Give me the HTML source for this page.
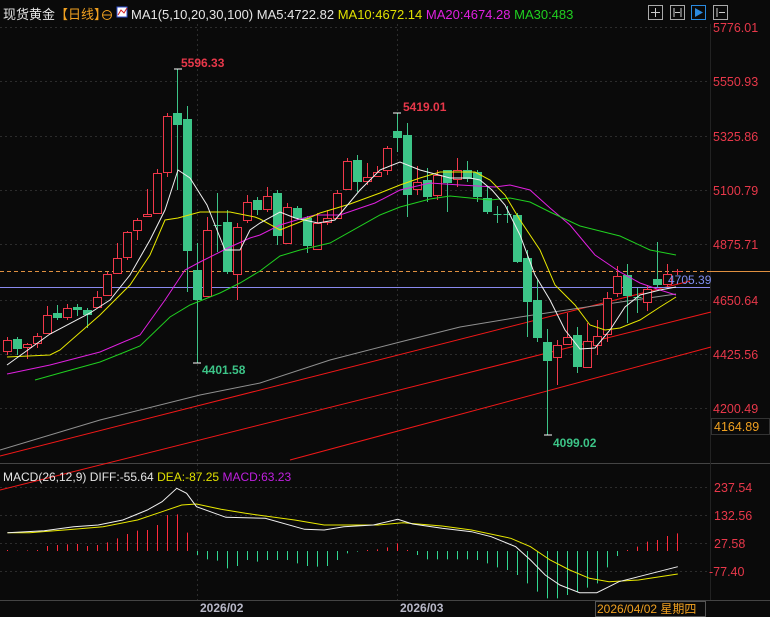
<!DOCTYPE html>
<html><head><meta charset="utf-8"><style>
html,body{margin:0;padding:0;background:#0a0a0a;width:770px;height:617px;overflow:hidden}
svg{display:block}
text{font-family:"Liberation Sans","Noto Sans CJK SC",sans-serif}
</style></head><body>
<svg id="s" width="770" height="617" xmlns="http://www.w3.org/2000/svg">
<rect width="770" height="617" fill="#0a0a0a"/>
<g id="grid"></g>
<g id="main"></g>
<text x="3" y="19" font-size="13" fill="#e6e6e6">现货黄金<tspan fill="#f0a020">【日线】</tspan></text>
<circle cx="107" cy="15" r="4.5" fill="none" stroke="#f0a020" stroke-width="1"/><line x1="103" y1="15" x2="111" y2="15" stroke="#f0a020"/>
<rect x="117" y="7" width="10" height="10" fill="#fff" stroke="#3050d0"/><polyline points="118,15 121,10 124,13 127,8" fill="none" stroke="#d02020"/>
<text x="131" y="19" font-size="13" fill="#e6e6e6">MA1(5,10,20,30,100) MA5:4722.82 <tspan fill="#e0e000">MA10:4672.14</tspan> <tspan fill="#e020e0">MA20:4674.28</tspan> <tspan fill="#20d020">MA30:483</tspan></text>
<g fill="none" stroke="#aaa">
<rect x="648.5" y="5.5" width="14" height="14"/><rect x="670.5" y="5.5" width="14" height="14"/><rect x="713.5" y="5.5" width="14" height="14"/>
<rect x="691.5" y="5.5" width="14" height="14" stroke="#2a8ae0"/>
</g>
<g stroke="#ccc"><line x1="655.5" y1="8" x2="655.5" y2="17"/><line x1="651" y1="12.5" x2="660" y2="12.5"/><line x1="674" y1="8" x2="674" y2="17"/><line x1="681" y1="8" x2="681" y2="17"/><line x1="675" y1="12.5" x2="680" y2="12.5"/><line x1="717" y1="8" x2="717" y2="17"/><line x1="719" y1="12.5" x2="725" y2="12.5"/></g>
<polygon points="695,8 695,17 703,12.5" fill="#2a8ae0"/>
<g font-size="12.5" fill="#e8384a" id="axis"></g>
<text x="181" y="67" font-size="12" font-weight="bold" fill="#e8384a">5596.33</text>
<text x="403" y="111" font-size="12" font-weight="bold" fill="#e8384a">5419.01</text>
<text x="202" y="374" font-size="12" font-weight="bold" fill="#3cc487">4401.58</text>
<text x="553" y="447" font-size="12" font-weight="bold" fill="#3cc487">4099.02</text>
<text x="668" y="284" font-size="12" fill="#7f8ff0">4705.39</text>
<rect x="711.5" y="418.5" width="58" height="16" fill="#0a0a0a" stroke="#333"/>
<text x="714" y="431" font-size="12.5" fill="#f0a020">4164.89</text>
<text x="3" y="481" font-size="12" fill="#e6e6e6">MACD(26,12,9) DIFF:-55.64 <tspan fill="#e0e000">DEA:-87.25</tspan> <tspan fill="#c020e0">MACD:63.23</tspan></text>
<g id="macd"></g>
<line x1="0" y1="600.5" x2="770" y2="600.5" stroke="#444"/>
<text x="200" y="612" font-size="12" font-weight="bold" fill="#b8b8c8">2026/02</text>
<text x="400" y="612" font-size="12" font-weight="bold" fill="#b8b8c8">2026/03</text>
<rect x="595.5" y="601.5" width="110" height="15" fill="#0a0a0a" stroke="#555"/>
<text x="597" y="613" font-size="12" fill="#f0a020">2026/04/02 星期四</text>
</svg>
<script>
var NS="http://www.w3.org/2000/svg";
function el(p,t,a){var e=document.createElementNS(NS,t);for(var k in a)e.setAttribute(k,a[k]);p.appendChild(e);return e;}
var G=document.getElementById('grid'),M=document.getElementById('main'),A=document.getElementById('axis'),D=document.getElementById('macd');
var labs=[[27,"5776.01"],[81,"5550.93"],[136,"5325.86"],[190,"5100.79"],[244,"4875.71"],[300,"4650.64"],[354,"4425.56"],[408,"4200.49"]];
labs.forEach(function(l){el(G,'line',{x1:0,x2:710,y1:l[0]+0.5,y2:l[0]+0.5,stroke:'#2c2c2c','stroke-dasharray':'2,3'});var t=el(A,'text',{x:713,y:l[0]+5});t.textContent=l[1];});
[[487,"237.54"],[515,"132.56"],[543,"27.58"],[571,"-77.40"]].forEach(function(l){el(G,'line',{x1:0,x2:710,y1:l[0]+0.5,y2:l[0]+0.5,stroke:'#2c2c2c','stroke-dasharray':'2,3'});var t=el(A,'text',{x:l[1][0]=='-'?709:714,y:l[0]+5});t.textContent=l[1];});
[197.5,397.5].forEach(function(x){el(G,'line',{x1:x,x2:x,y1:24,y2:600,stroke:'#2c2c2c','stroke-dasharray':'2,3'});});
el(G,'line',{x1:0,x2:770,y1:463.5,y2:463.5,stroke:'#444'});
el(G,'line',{x1:710.5,x2:710.5,y1:24,y2:600,stroke:'#222'});
function pl(pts,c,w){el(M,'polyline',{points:pts,fill:'none',stroke:c,'stroke-width':w||1});}
pl("0,456 690,281","#f01818");pl("0,490 711,312","#f01818");pl("290,460 711,347","#f01818");
pl("0,450 100,420 200,395 260,383 330,360 400,342 460,327 520,317 600,305 676,294","#909090");
el(M,'line',{x1:0,x2:770,y1:271.5,y2:271.5,stroke:'#e09040','stroke-dasharray':'4,3'});
el(M,'line',{x1:710,x2:770,y1:271.5,y2:271.5,stroke:'#e09040'});
el(M,'line',{x1:0,x2:710,y1:287.5,y2:287.5,stroke:'#8a8af0'});
var C=[[340,351,337,355,'r'],[339,349,337,355,'g'],[344,347,343,359,'r'],[336,343,333,348,'r'],[315,333,306,333,'r'],[313,318,305,320,'g'],[308,317,304,320,'r'],[307,310,304,316,'g'],[310,315,308,328,'g'],[297,307,291,307,'r'],[274,295,272,295,'r'],[258,273,243,273,'r'],[232,257,231,260,'r'],[220,230,218,240,'r'],[214,216,189,217,'r'],[173,213,169,213,'r'],[116,172,113,177,'r'],[113,125,69,190,'g'],[119,251,106,292,'g'],[270,300,243,363,'g'],[230,296,217,296,'r'],[225,225,193,252,'x'],[222,272,210,274,'g'],[227,274,223,300,'r'],[202,220,195,223,'r'],[200,210,197,215,'g'],[196,209,187,212,'r'],[193,236,190,245,'g'],[207,243,203,243,'r'],[208,218,206,220,'g'],[218,246,216,253,'g'],[223,249,213,249,'r'],[218,222,210,225,'r'],[193,218,190,218,'r'],[161,189,158,189,'r'],[160,182,155,192,'g'],[177,181,163,185,'r'],[172,176,166,176,'r'],[148,170,146,175,'r'],[131,138,113,152,'g'],[135,195,123,217,'g'],[182,189,166,195,'r'],[180,197,168,202,'g'],[175,195,170,200,'r'],[170,183,170,212,'g'],[170,179,158,187,'r'],[170,179,161,182,'g'],[172,197,170,202,'g'],[198,212,187,214,'g'],[214,214,206,223,'x'],[214,214,206,223,'x'],[215,262,213,263,'g'],[258,302,250,337,'g'],[300,338,280,342,'g'],[342,361,329,435,'g'],[345,357,340,385,'r'],[337,344,313,344,'r'],[335,367,327,373,'g'],[341,367,323,367,'r'],[336,345,320,355,'r'],[298,334,292,342,'r'],[276,293,266,297,'r'],[275,296,264,323,'g'],[297,297,288,313,'x'],[289,302,285,311,'r'],[279,285,242,287,'g'],[274,284,264,287,'r'],[271,271,269,275,'xr']];
C.forEach(function(c,i){var x=7.5+10*i;var col=(c[4]=='r'||c[4]=='xr')?'#f0384a':'#3cc487';
el(M,'line',{x1:x,x2:x,y1:c[2],y2:c[3],stroke:col});
if(c[4]=='r')el(M,'rect',{x:x-4,y:c[0]+0.5,width:8,height:Math.max(1,c[1]-c[0]),fill:'#0a0a0a',stroke:col});
else if(c[4]=='g')el(M,'rect',{x:x-4.5,y:c[0],width:9,height:Math.max(1,c[1]-c[0]),fill:col});
else el(M,'line',{x1:x-4,x2:x+4,y1:c[0]+0.5,y2:c[0]+0.5,stroke:col});});
pl("174,69 182,69","#fff");pl("193,363 201,363","#fff");pl("393,113 401,113","#fff");pl("544,435 552,435","#fff");
pl("7,374 50,365 100,352 140,335 165,300 185,270 200,262 230,247 250,238 260,235 280,225 300,219 315,215 340,215 375,203 400,190 430,183 460,185 495,187 510,185 530,190 550,208 570,225 595,255 620,272 640,283 660,290 676,295","#e020e0");
pl("35,380 60,373 100,362 140,346 170,317 190,305 220,293 240,283 260,271 280,256 300,250 330,243 380,215 400,207 430,199 450,196 470,198 490,200 510,198 530,202 550,212 580,226 620,236 650,250 676,255","#20d020");
pl("7,357 50,355 60,350 100,315 130,285 150,255 165,220 178,218 200,212 230,212 255,217 260,219 280,230 300,222 320,213 350,204 380,193 400,185 420,178 440,172 475,172 490,180 505,195 520,220 540,250 555,285 575,305 590,325 605,330 620,328 640,320 660,307 676,297","#e8e800");
pl("7,365 50,334 90,313 110,300 130,275 150,240 165,210 178,170 190,178 207,205 225,250 240,250 250,230 260,223 280,212 295,218 318,223 335,220 360,190 380,170 400,162 420,170 450,178 470,178 480,180 492,190 505,205 520,235 535,275 550,300 565,330 580,349 595,348 610,330 625,307 640,295 660,290 676,287","#f0f0f0");
var H=[270,272,271,270,258,255,253,252,258,255,247,235,222,212,210,195,165,163,218,285,298,302,325,318,300,305,300,300,300,310,318,320,318,300,280,275,270,268,262,250,270,285,298,298,298,298,298,300,310,322,330,345,370,395,415,415,405,395,383,370,322,288,270,260,245,240,228,220];
var z=551;
H.forEach(function(h,i){var x=7.5+10*i;var y=460+h/3;var red=y<z;el(D,'line',{x1:x,x2:x,y1:z,y2:y,stroke:red?'#ff2a3a':'#30d890','stroke-width':1});});
function mp(s){return s.split(' ').map(function(p){var a=p.split(',');return (a[0]/2.036).toFixed(1)+','+(460+a[1]/3).toFixed(1);}).join(' ');}
el(D,'polyline',{points:mp("15,218 60,218 150,208 210,200 280,180 330,155 370,135 400,132 450,148 500,160 600,180 660,195 770,195 820,188 900,198 960,210 1040,235 1080,260 1120,300 1160,330 1200,355 1240,365 1300,360 1380,342"),fill:'none',stroke:'#e8e800'});
el(D,'polyline',{points:mp("15,218 90,212 150,200 200,195 250,180 300,150 330,125 360,85 380,100 400,140 460,172 540,175 620,208 660,210 700,200 760,195 810,178 840,192 900,205 960,215 1000,230 1050,260 1080,300 1110,345 1140,375 1180,398 1215,398 1240,380 1260,365 1300,350 1340,335 1380,320"),fill:'none',stroke:'#f0f0f0'});
</script>
</body></html>
